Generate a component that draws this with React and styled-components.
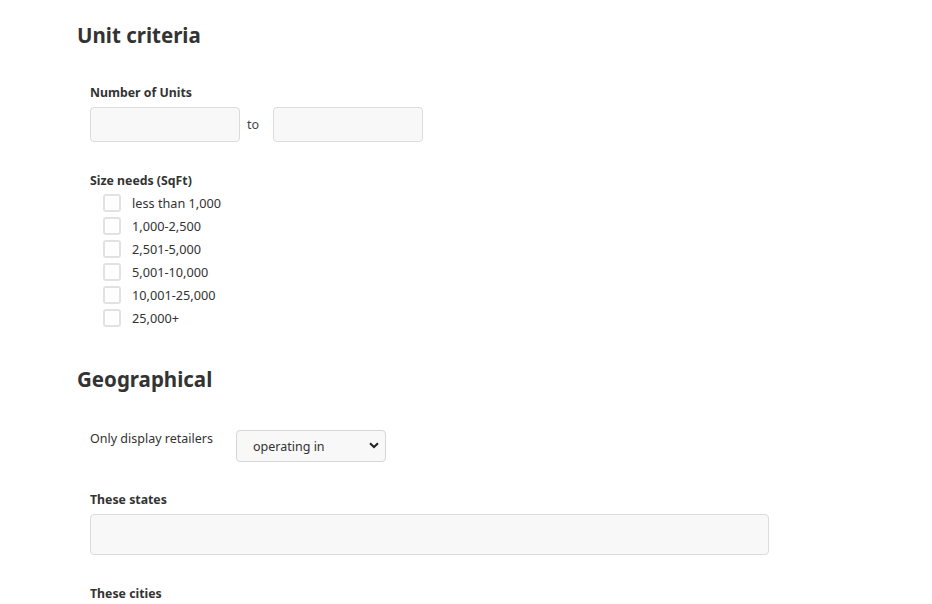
import React from "react";
import styled, { createGlobalStyle } from "styled-components";

const Global = createGlobalStyle`
  html, body { margin: 0; padding: 0; background: #fff; }
  body { font-family: "Noto Sans", "Open Sans", sans-serif; color: #333; }
  * { box-sizing: border-box; }
`;

const Page = styled.div`
  padding: 20px 0 0 77px;
  width: 932px;
  height: 604px;
  overflow: hidden;
`;

const SectionTitle = styled.h2`
  margin: 0 0 ${(p) => p.$gap || 34}px 0;
  font-size: 20.5px;
  line-height: 30px;
  font-weight: 700;
  color: #333;
`;

const Body = styled.div`
  padding-left: 13px;
  display: flex;
  flex-direction: column;
`;

const Field = styled.div`
  display: flex;
  flex-direction: column;
  margin-bottom: ${(p) => p.$mb || 0}px;
`;

const Label = styled.div`
  font-size: 12.3px;
  font-weight: 700;
  line-height: 16px;
  color: #333;
  margin-bottom: ${(p) => p.$mb || 6}px;
`;

const RangeRow = styled.div`
  display: flex;
  align-items: center;
`;

const TextInput = styled.input`
  width: ${(p) => p.$w || 150}px;
  height: ${(p) => p.$h || 35}px;
  border: 1px solid #dcdcdc;
  border-radius: 4px;
  background: #f8f8f8;
  outline: none;
  padding: 0 10px;
  font: inherit;
`;

const To = styled.span`
  font-size: 12.5px;
  color: #444;
  width: 33px;
  padding-left: 7px;
`;

const CheckList = styled.div`
  display: flex;
  flex-direction: column;
  padding-left: 13px;
`;

const CheckRow = styled.label`
  display: flex;
  align-items: center;
  height: 23px;
  font-size: 12.7px;
  color: #333;
`;

const Box = styled.span`
  width: 18px;
  height: 18px;
  border: 2px solid #e2e2e2;
  border-radius: 3px;
  margin-right: 11px;
  background: #fff;
`;

const InlineRow = styled.div`
  display: flex;
  align-items: flex-start;
  margin-bottom: ${(p) => p.$mb || 0}px;
`;

const InlineLabel = styled.span`
  font-size: 12.5px;
  color: #333;
  width: 146px;
`;

const SelectWrap = styled.div`
  position: relative;
  width: 150px;
  height: 32px;
`;

const Select = styled.select`
  appearance: none;
  -webkit-appearance: none;
  width: 150px;
  height: 32px;
  border: 1px solid #d6d6d6;
  border-radius: 4px;
  background: #f8f8f8;
  font: inherit;
  font-size: 12.5px;
  color: #333;
  padding: 0 0 0 16px;
  outline: none;
`;

const Chevron = styled.svg`
  position: absolute;
  right: 7px;
  top: 12px;
  pointer-events: none;
`;

const sizes = [
  "less than 1,000",
  "1,000-2,500",
  "2,501-5,000",
  "5,001-10,000",
  "10,001-25,000",
  "25,000+",
];

export default function App() {
  return (
    <>
      <Global />
      <Page>
        <SectionTitle $gap={35}>Unit criteria</SectionTitle>
        <Body>
          <Field $mb={31}>
            <Label $mb={6}>Number of Units</Label>
            <RangeRow>
              <TextInput />
              <To>to</To>
              <TextInput />
            </RangeRow>
          </Field>
          <Field $mb={35}>
            <Label $mb={2}>Size needs (SqFt)</Label>
            <CheckList>
              {sizes.map((s) => (
                <CheckRow key={s}>
                  <Box />
                  {s}
                </CheckRow>
              ))}
            </CheckList>
          </Field>
        </Body>
        <SectionTitle $gap={36}>Geographical</SectionTitle>
        <Body>
          <InlineRow $mb={30}>
            <InlineLabel>Only display retailers</InlineLabel>
            <SelectWrap>
              <Select defaultValue="operating in">
                <option>operating in</option>
                <option>not operating in</option>
              </Select>
              <Chevron width="10" height="7" viewBox="0 0 10 7">
                <path d="M1 1.2 L5 5 L9 1.2" fill="none" stroke="#222" strokeWidth="2" />
              </Chevron>
            </SelectWrap>
          </InlineRow>
          <Field $mb={31}>
            <Label $mb={6}>These states</Label>
            <TextInput $w={679} $h={41} />
          </Field>
          <Field>
            <Label>These cities</Label>
          </Field>
        </Body>
      </Page>
    </>
  );
}
